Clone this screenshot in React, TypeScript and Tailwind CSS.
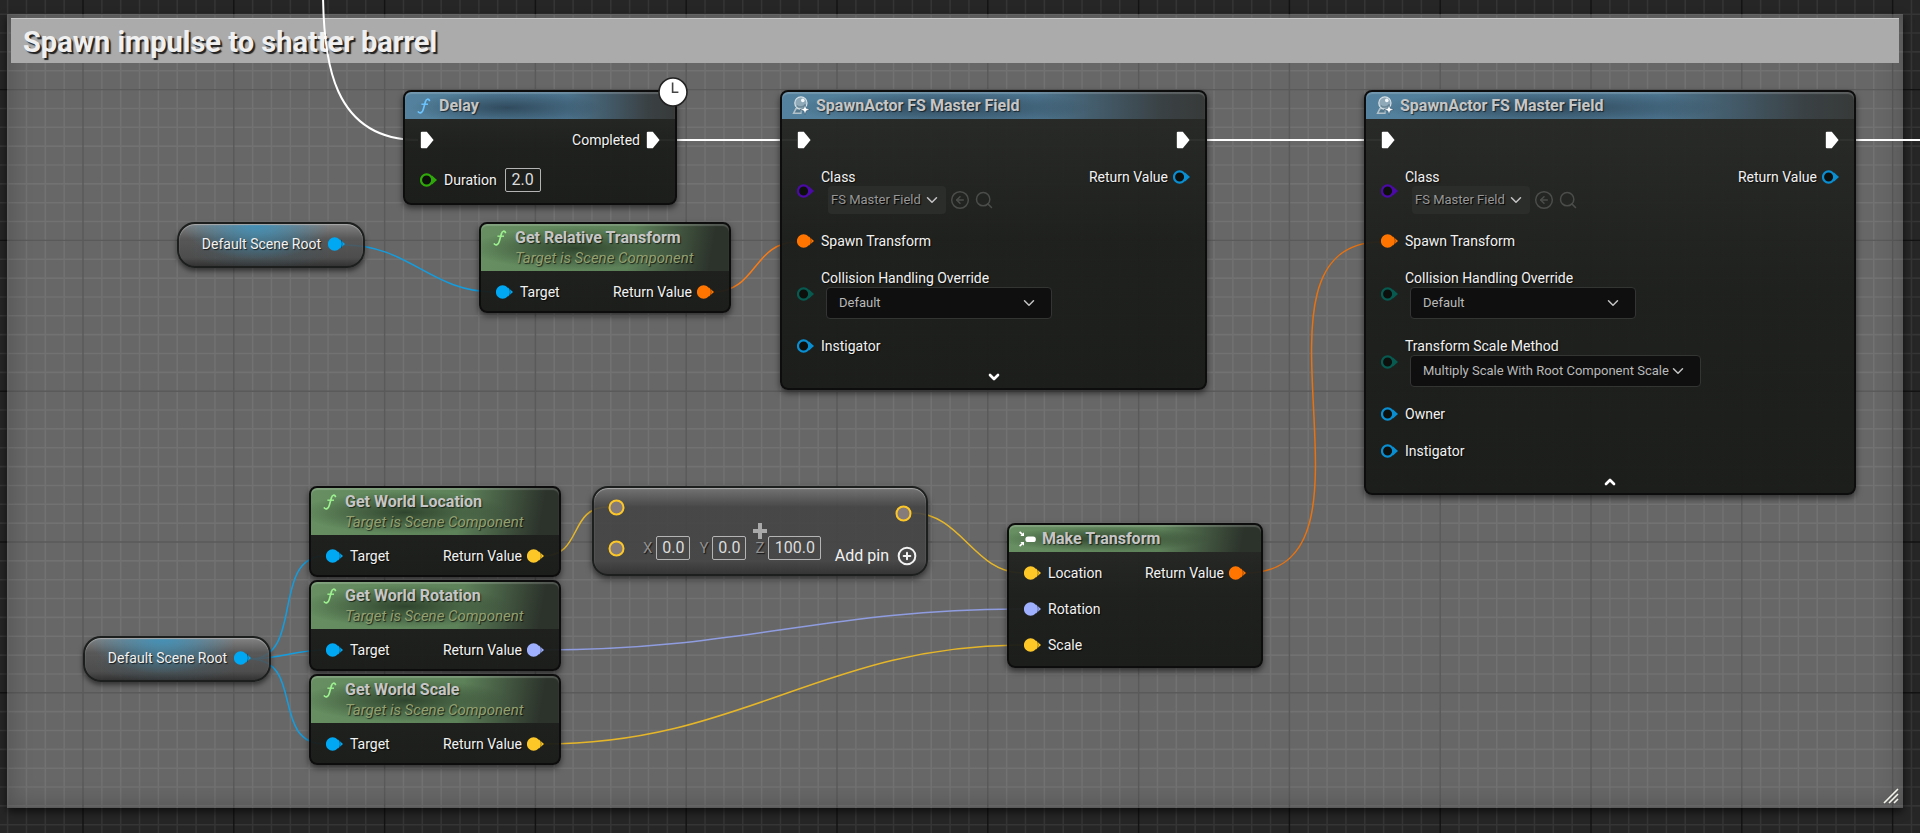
import React, { useId } from 'react';
import { ChevronDown, ChevronUp, CircleArrowLeft, CirclePlus, Search } from 'lucide-react';

type PinColor = 'blue' | 'orange' | 'yellow' | 'lavender' | 'purple' | 'teal' | 'green' | 'sky';

const PIN_COLORS: Record<PinColor, string> = {
  blue: '#00a8f4',
  orange: '#ff7500',
  yellow: '#fdc728',
  lavender: '#9fb0ff',
  purple: '#4b0aa8',
  teal: '#075a50',
  green: '#2fa80a',
  sky: '#0a8ed2',
};

const WIRES = [
  { d: 'M323 -10 C323 60 332 140 418 140', color: '#ffffff', width: 2 },
  { d: 'M660 140 H797', color: '#ffffff', width: 2 },
  { d: 'M1190 140 H1381', color: '#ffffff', width: 2 },
  { d: 'M1840 140 H4000', color: '#ffffff', width: 2 },
  { d: 'M344 245 C410 245 430 292 495 292', color: '#139ddf', width: 1.5 },
  { d: 'M713 292 C757 292 753 242 797 242', color: '#f77b16', width: 1.5 },
  { d: 'M250 659 C305 659 270 556 325 556', color: '#139ddf', width: 1.5 },
  { d: 'M250 659 C280 659 295 650 325 650', color: '#139ddf', width: 1.5 },
  { d: 'M250 659 C305 659 270 744 325 744', color: '#139ddf', width: 1.5 },
  { d: 'M543 556 C583 556 568 507 608 507', color: '#e6b629', width: 1.5 },
  { d: 'M912 513 C962 513 973 573 1023 573', color: '#e6b629', width: 1.5 },
  { d: 'M543 650 C743 650 823 609 1023 609', color: '#8f9de0', width: 1.5 },
  { d: 'M543 744 C743 744 823 645 1023 645', color: '#e6b629', width: 1.5 },
  { d: 'M1246 573 C1398 573 1229 242 1381 242', color: '#e8720f', width: 1.5 },
];

const GRID_STEP = 18.85;
const GRID_LINES = Array.from({ length: 210 }, (_, i) => i);

const Grid: React.FC = () => (
  <svg className="absolute inset-0 h-full w-full" aria-hidden="true">
    {[false, true].map((major) =>
      GRID_LINES.filter((i) => (i % 8 === 4) === major).map((i) => {
        const x = 7.6 + i * GRID_STEP;
        const y = 14.2 + i * GRID_STEP;
        const stroke = major ? '#131313' : '#353535';
        return (
          <g key={i} stroke={stroke} strokeWidth={major ? 1.4 : 1.6}>
            <line x1={x} y1="0" x2={x} y2="100%" />
            <line x1="0" y1={y} x2="100%" y2={y} />
          </g>
        );
      })
    )}
  </svg>
);

const Wires: React.FC = () => (
  <svg className="pointer-events-none absolute inset-0 h-full w-full" fill="none" aria-hidden="true">
    {WIRES.map((wire) => (
      <path key={wire.d} d={wire.d} stroke={wire.color} strokeWidth={wire.width} />
    ))}
  </svg>
);

const Pin: React.FC<{ color: PinColor; filled?: boolean }> = ({ color, filled }) => {
  const c = PIN_COLORS[color];
  return (
    <svg className="h-4 w-[17px] shrink-0" viewBox="0 0 17 16" aria-hidden="true">
      <path d="M12 3.6 L17 8 L12 12.4 Z" fill={c} />
      <circle cx="6.6" cy="8" r="5.6" fill={filled ? c : '#0d0f0d'} stroke={c} strokeWidth="2.2" />
      {filled && <path d="M13.2 3.8 Q15.2 8 13.2 12.2" stroke="#10120f" strokeOpacity="0.5" strokeWidth="0.8" fill="none" />}
    </svg>
  );
};

const ExecPin: React.FC = () => (
  <svg className="h-[18px] w-[14px] shrink-0" viewBox="0 0 14 18" aria-hidden="true">
    <path d="M0.8 1.8 Q0.8 0.8 1.8 0.8 H6.8 L13.6 9 L6.8 17.2 H1.8 Q0.8 17.2 0.8 16.2 Z" fill="#fff" />
  </svg>
);

const RingPin: React.FC = () => (
  <svg className="h-[17px] w-[17px] shrink-0" viewBox="0 0 17 17" aria-hidden="true">
    <circle cx="8.5" cy="8.5" r="7" fill="#857b7b" stroke="#fdc728" strokeWidth="2" />
  </svg>
);

const FunctionIcon: React.FC<{ className: string }> = ({ className }) => (
  <svg className={`mx-[2px] h-4 w-[14px] shrink-0 ${className}`} viewBox="0 0 14 16" fill="none" stroke="currentColor" aria-hidden="true">
    <path d="M12.4 2.4 C11.6 0.6 9.2 0.8 8.5 3.6 L6.2 11.6 C5.4 14.8 2.8 15.6 1.4 14" strokeWidth="1.7" strokeLinecap="round" />
    <path d="M4.4 6.2 H11" strokeWidth="1.4" />
  </svg>
);

const SpawnIcon: React.FC = () => (
  <svg className="h-[19px] w-[18px] shrink-0" viewBox="0 0 18 19" aria-hidden="true">
    <path d="M0.4 18 L3.4 12 H9.6 V18 Z" fill="#b3c2ca" />
    <path d="M2.8 16.4 L4.6 13.2 H8.6 V16.4 Z" fill="#56788c" />
    <circle cx="8.9" cy="7" r="6.1" fill="#8fa9b8" stroke="#d6e0e5" strokeWidth="1.2" />
    <path d="M4.8 9.6 Q8 12.4 12.4 9.6" stroke="#6c8797" strokeWidth="1.4" fill="none" />
    <circle cx="10.8" cy="4.4" r="1.8" fill="#f4f8fa" />
    <path d="M13 8.4 L14.3 12.3 L18 13.6 L14.3 14.9 L13 18.8 L11.7 14.9 L8 13.6 L11.7 12.3 Z" fill="#fff" stroke="#3d5f75" strokeWidth="0.7" />
  </svg>
);

const MakeIcon: React.FC = () => (
  <svg className="h-4 w-[17px] shrink-0" viewBox="0 0 17 16" aria-hidden="true">
    <rect x="6.4" y="5.4" width="10.4" height="5.6" rx="2.6" fill="#fff" />
    <path d="M0.6 0.8 L3.6 3.6 M0.6 15.2 L3.6 12.4" stroke="#fff" strokeWidth="1.6" />
    <path d="M5 1.2 V5 H1.4 Z M5 14.8 V11 H1.4 Z" fill="#fff" />
  </svg>
);

const ClockBadge: React.FC = () => (
  <svg className="absolute -top-[15px] -right-[13px] h-[30px] w-[30px]" viewBox="0 0 30 30" aria-hidden="true">
    <circle cx="15" cy="15" r="14" fill="#fff" stroke="#222" strokeWidth="1.6" />
    <path d="M14.6 5.4 V15.2 H20.4" stroke="#444" strokeWidth="1.6" fill="none" />
  </svg>
);

const HEADER_TONES = {
  blue: 'bg-[radial-gradient(ellipse_36%_60%_at_38%_58%,#2b4253d9,transparent),linear-gradient(to_right,#54829e,#4c748e_60%,#3a4144_90%,#373a39)]',
  green: 'bg-[radial-gradient(ellipse_42%_45%_at_38%_52%,#2b3e29e6,transparent),linear-gradient(100deg,#678f62,#5d8159_60%,#2c332b_92%)]',
};

interface NodeProps {
  title: string;
  subtitle?: string;
  tone: 'blue' | 'green';
  icon: React.ReactNode;
  className: string;
  badge?: React.ReactNode;
  children: React.ReactNode;
}

const GraphNode: React.FC<NodeProps> = ({ title, subtitle, tone, icon, className, badge, children }) => (
  <article
    className={`rounded-lg border-2 border-[#0c0d0c] bg-[linear-gradient(to_bottom,#262826f0,#1b1d1af2_50%,#181a17f2)] shadow-[0_3px_6px_rgba(0,0,0,0.55)] ${className}`}
  >
    <header
      className={`flex gap-[6px] rounded-t-md pl-[10px] shadow-[inset_0_2px_1px_rgba(255,255,255,0.18)] ${subtitle ? 'h-[47px] pt-1' : 'h-[27px] items-center'} ${HEADER_TONES[tone]}`}
    >
      {icon}
      <div>
        <h2 className="text-base leading-5 font-bold text-[#c6c6c6] [text-shadow:1px_1px_1px_rgba(0,0,0,0.6)]">{title}</h2>
        {subtitle && <p className="text-[15px] leading-5 text-[#93a070] italic">{subtitle}</p>}
      </div>
    </header>
    <div className="px-[15px] pt-[11px]">{children}</div>
    {badge}
  </article>
);

const Input: React.FC<{ label: string; color: PinColor; filled?: boolean }> = ({ label, color, filled }) => (
  <div className="flex h-5 items-center gap-[7px]">
    <Pin color={color} filled={filled} />
    <span>{label}</span>
  </div>
);

const Output: React.FC<{ label: string; color: PinColor; filled?: boolean }> = ({ label, color, filled }) => (
  <div className="flex h-5 items-center gap-[5px]">
    <span>{label}</span>
    <Pin color={color} filled={filled} />
  </div>
);

const SelectInput: React.FC<{ label: string; value: string; color: PinColor; width: string; asset?: boolean }> = ({
  label,
  value,
  color,
  width,
  asset,
}) => {
  const id = useId();
  return (
    <div className="flex items-center gap-[7px]">
      <Pin color={color} />
      <div>
        <label htmlFor={id} className="block h-[19px]">
          {label}
        </label>
        <div className="flex items-center gap-1 pl-[5px]">
          <div className={`relative ${width} ${asset ? 'ml-[2px]' : ''}`}>
            <select
              id={id}
              defaultValue={value}
              className={
                asset
                  ? 'block h-7 w-full appearance-none rounded bg-[#2b2d2b] pl-[3px] text-[13px] text-[#989898] [text-shadow:1px_1px_1px_#000]'
                  : 'block h-8 w-full appearance-none rounded border border-[#333533] bg-[#0f0f0f] pl-3 text-[13px] text-[#b9b9b9]'
              }
            >
              <option>{value}</option>
            </select>
            <ChevronDown
              className={`pointer-events-none absolute h-[18px] w-[18px] text-[#c4c4c4] ${asset ? 'top-[5px] right-[5px]' : 'top-[7px] right-[14px]'}`}
            />
          </div>
          {asset && (
            <>
              <button type="button" aria-label="Use selected asset" className="text-[#4b4d4b]">
                <CircleArrowLeft className="h-5 w-5" strokeWidth={1.8} />
              </button>
              <button type="button" aria-label="Browse to asset" className="text-[#4b4d4b]">
                <Search className="h-5 w-5" strokeWidth={1.8} />
              </button>
            </>
          )}
        </div>
      </div>
    </div>
  );
};

const NumberBox: React.FC<{ label: string; value: string; width: string; dim?: boolean }> = ({ label, value, width, dim }) => (
  <label className={`flex items-center ${dim ? 'gap-1' : 'gap-2'}`}>
    <span className={dim ? 'text-[15px] text-[#8e8e8e]' : ''}>{label}</span>
    <input
      type="text"
      defaultValue={value}
      className={`h-6 rounded-xs border border-[#b4b4b4] bg-transparent text-center text-base text-[#dcdcdc] ${width}`}
    />
  </label>
);

const SceneRoot: React.FC<{ className: string }> = ({ className }) => (
  <article
    className={`absolute flex h-[46px] w-[188px] items-center justify-end gap-[7px] rounded-[18px] border-2 border-[#1d1e1e] bg-[radial-gradient(ellipse_40%_85%_at_42%_0%,#4291b8,transparent),radial-gradient(ellipse_40%_50%_at_45%_60%,#3c5f6e80,transparent),linear-gradient(to_bottom,#8a8a8acc,#555555d9_35%,#484848d9_80%,#2a2a2ad9)] pr-[18px] pb-[2px] shadow-[0_3px_5px_rgba(0,0,0,0.5),inset_0_1px_1px_#a9a9a9] ${className}`}
  >
    <span>Default Scene Root</span>
    <Pin color="blue" filled />
  </article>
);

const ComponentGetter: React.FC<{ title: string; output: PinColor; className?: string }> = ({ title, output, className = '' }) => (
  <GraphNode
    title={title}
    subtitle="Target is Scene Component"
    tone="green"
    icon={<FunctionIcon className="mt-[2px] text-[#9df08f]" />}
    className={`w-[252px] ${className}`}
  >
    <div className="flex justify-between pb-[9px]">
      <Input label="Target" color="blue" filled />
      <Output label="Return Value" color={output} filled />
    </div>
  </GraphNode>
);

const SpawnActor: React.FC<{ expanded?: boolean; className: string }> = ({ expanded, className }) => (
  <GraphNode title="SpawnActor FS Master Field" tone="blue" icon={<SpawnIcon />} className={className}>
    <div className="flex h-5 items-center justify-between">
      <ExecPin />
      <ExecPin />
    </div>
    <div className="flex justify-between pt-[17px]">
      <div className="flex flex-col gap-[17px]">
        <SelectInput label="Class" value="FS Master Field" color="purple" width="w-[118px]" asset />
        <Input label="Spawn Transform" color="orange" filled />
        <SelectInput label="Collision Handling Override" value="Default" color="teal" width="w-[226px]" />
        {expanded && (
          <>
            <SelectInput
              label="Transform Scale Method"
              value="Multiply Scale With Root Component Scale"
              color="teal"
              width="w-[291px]"
            />
            <Input label="Owner" color="sky" />
          </>
        )}
        <Input label="Instigator" color="sky" />
      </div>
      <Output label="Return Value" color="sky" />
    </div>
    <button
      type="button"
      aria-label={expanded ? 'Collapse' : 'Expand'}
      className="mx-auto mt-1 flex h-7 items-end pb-[3px] text-white"
    >
      {expanded ? <ChevronUp className="h-4 w-4" strokeWidth={4} /> : <ChevronDown className="h-4 w-4" strokeWidth={4} />}
    </button>
  </GraphNode>
);

const App: React.FC = () => {
  return (
    <main className="relative flex min-h-screen overflow-hidden bg-[#262626] pt-[14px] pr-[17px] pb-[25px] pl-[7px] font-[Roboto,sans-serif] text-sm leading-5 text-[#f2f2f2] [text-shadow:1px_1px_1px_rgba(0,0,0,0.7)]">
      <Grid />

      <section className="relative flex min-h-[794px] flex-1 flex-col bg-white/30 p-1 shadow-[0_4px_8px_rgba(0,0,0,0.6),inset_0_0_24px_rgba(0,0,0,0.25)]">
        <h1 className="h-[45px] border-t border-[#c6c6c6] bg-[#ababab] pt-px pl-3 text-[29px] leading-[44px] font-bold text-[#f0f0f0] [text-shadow:2px_2px_1px_#222]">
          Spawn impulse to shatter barrel
        </h1>
        <svg className="mt-auto ml-auto h-4 w-4" viewBox="0 0 16 16" stroke="#f4f4ec" strokeWidth="1.6" aria-hidden="true">
          <path d="M1 15 L15 1 M6 15 L15 6 M11 15 L15 11" />
        </svg>
      </section>

      <Wires />

      <GraphNode
        title="Delay"
        tone="blue"
        icon={<FunctionIcon className="text-[#6cc4ff]" />}
        className="absolute top-[90px] left-[403px] w-[274px]"
        badge={<ClockBadge />}
      >
        <div className="flex h-5 items-center justify-between">
          <ExecPin />
          <div className="flex items-center gap-[6px]">
            <span>Completed</span>
            <ExecPin />
          </div>
        </div>
        <div className="flex items-center gap-[7px] pt-[18px] pb-[11px]">
          <Pin color="green" />
          <NumberBox label="Duration" value="2.0" width="w-9" />
        </div>
      </GraphNode>

      <SceneRoot className="top-[222px] left-[177px]" />
      <ComponentGetter title="Get Relative Transform" output="orange" className="absolute top-[222px] left-[479px]" />

      <SpawnActor className="absolute top-[90px] left-[780px] w-[427px]" />
      <SpawnActor expanded className="absolute top-[90px] left-[1364px] w-[492px]" />

      <SceneRoot className="top-[636px] left-[83px]" />
      <div className="absolute top-[486px] left-[309px] flex flex-col gap-[3px]">
        <ComponentGetter title="Get World Location" output="yellow" />
        <ComponentGetter title="Get World Rotation" output="lavender" />
        <ComponentGetter title="Get World Scale" output="yellow" />
      </div>

      <article className="absolute top-[486px] left-[592px] flex h-[90px] w-[336px] justify-between rounded-[16px] border-2 border-[#1d1e1e] bg-[linear-gradient(to_bottom,#757575d9,#444444e6_22%,#444444e6_85%,#303030e6)] pt-[11px] pr-[9px] pb-2 pl-[14px] shadow-[0_3px_6px_rgba(0,0,0,0.55),inset_0_1px_1px_#a9a9a9]">
        <div className="flex flex-col gap-[22px]">
          <RingPin />
          <div className="flex h-5 items-center gap-[9px]">
            <RingPin />
            <div className="flex items-center gap-[9px] pl-[9px]">
              <NumberBox label="X" value="0.0" width="w-[34px]" dim />
              <NumberBox label="Y" value="0.0" width="w-[34px]" dim />
              <NumberBox label="Z" value="100.0" width="w-[53px]" dim />
            </div>
          </div>
        </div>
        <div className="flex flex-col items-end justify-between pt-[6px]">
          <div className="pr-[5px]">
            <RingPin />
          </div>
          <button type="button" className="flex items-center gap-2 text-base leading-5">
            Add pin
            <CirclePlus className="h-5 w-5" strokeWidth={2.4} />
          </button>
        </div>
        <svg className="absolute top-[35px] left-[159px] h-4 w-[14px]" viewBox="0 0 14 16" aria-hidden="true">
          <path d="M5 0 H9 V6 H14 V10 H9 V16 H5 V10 H0 V6 H5 Z" fill="#a9a9a9" />
        </svg>
      </article>

      <GraphNode title="Make Transform" tone="green" icon={<MakeIcon />} className="absolute top-[523px] left-[1007px] w-[256px]">
        <div className="flex justify-between pb-[11px]">
          <div className="flex flex-col gap-4">
            <Input label="Location" color="yellow" filled />
            <Input label="Rotation" color="lavender" filled />
            <Input label="Scale" color="yellow" filled />
          </div>
          <Output label="Return Value" color="orange" filled />
        </div>
      </GraphNode>
    </main>
  );
};

export default App;
